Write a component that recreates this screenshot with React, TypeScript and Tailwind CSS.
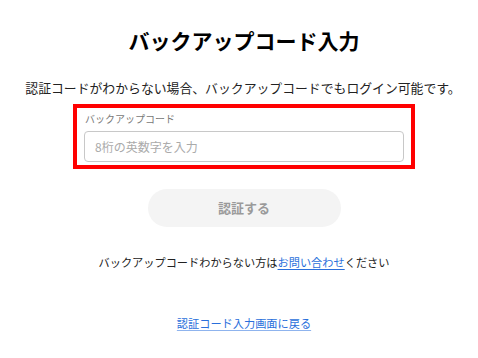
export default function App() {
  return (
    <div
      className="w-[478px] h-[358px] bg-white flex flex-col items-center text-[#222]"
      style={{ fontFamily: '"Noto Sans CJK JP", "Noto Sans", sans-serif' }}
    >
      <h1 className="mt-[24px] ml-[10px] text-[21px] leading-[32px] font-bold text-black">
        バックアップコード入力
      </h1>

      <p className="mt-[23px] ml-[8px] text-[12.85px] leading-[18px] text-[#222]">
        認証コードがわからない場合、バックアップコードでもログイン可能です。
      </p>

      <div className="mt-[7px] ml-[10px] w-[342px] border-[4px] border-[#ff0000] px-[7px] pt-[3px] pb-[3px]">
        <label className="block text-[10px] leading-[15px] text-[#777] pl-[1px]">バックアップコード</label>
        <input
          className="mt-[5px] w-[320px] h-[31px] rounded-[4px] border border-[#c8c8c8] px-[10px] text-[12px] placeholder:text-[#aaa] outline-none"
          placeholder="8桁の英数字を入力"
        />
      </div>

      <button className="mt-[20px] ml-[10px] w-[193px] h-[38px] rounded-full bg-[#f4f4f4] text-[13px] font-bold text-[#9a9a9a]">
        認証する
      </button>

      <p className="mt-[26px] ml-[10px] text-[11.2px] leading-[18px] text-[#222]">
        バックアップコードわからない方は
        <a className="text-[#2a6fdb] underline underline-offset-2">お問い合わせ</a>
        ください
      </p>

      <a className="mt-[43px] ml-[10px] text-[11.2px] leading-[18px] text-[#2a6fdb] underline underline-offset-2 decoration-[#8fb4ee]">
        認証コード入力画面に戻る
      </a>
    </div>
  )
}
